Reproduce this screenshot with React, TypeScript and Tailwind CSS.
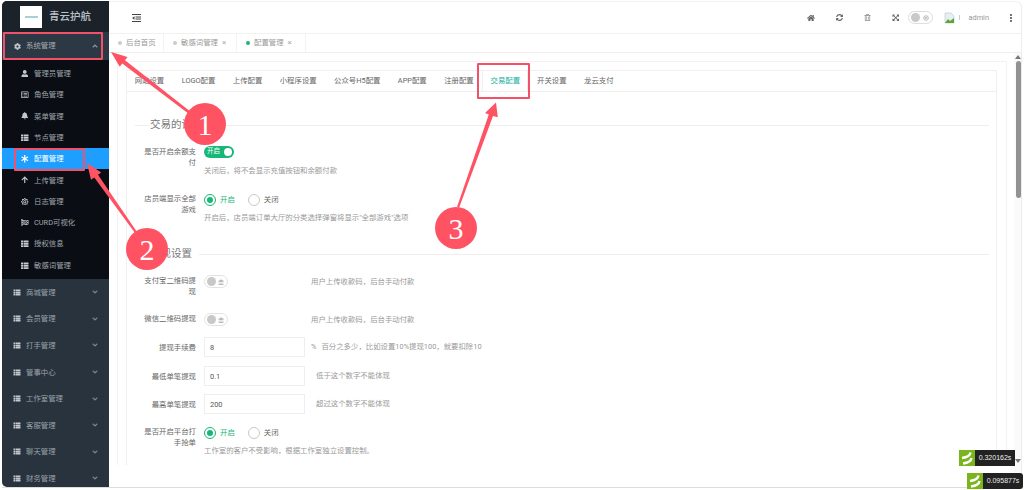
import type { ReactNode } from "react";
import {
  FaAsterisk,
  FaArrowUp,
  FaBell,
  FaCog,
  FaExpandArrowsAlt,
  FaFlagCheckered,
  FaHome,
  FaRegListAlt,
  FaRegSun,
  FaRegTrashAlt,
  FaSyncAlt,
  FaThList,
  FaUser,
  FaAngleDown,
  FaAngleUp,
} from "react-icons/fa";

const subMenu = [
  { name: "管理员管理", icon: <FaUser /> },
  { name: "角色管理", icon: <FaRegListAlt /> },
  { name: "菜单管理", icon: <FaBell /> },
  { name: "节点管理", icon: <FaThList /> },
  { name: "配置管理", icon: <FaAsterisk />, active: true },
  { name: "上传管理", icon: <FaArrowUp /> },
  { name: "日志管理", icon: <FaRegSun /> },
  { name: "CURD可视化", icon: <FaFlagCheckered /> },
  { name: "授权信息", icon: <FaThList /> },
  { name: "敏感词管理", icon: <FaThList /> },
];

const groups = ["商城管理", "会员管理", "打手管理", "管事中心", "工作室管理", "客服管理", "聊天管理", "财务管理"];

const tabs = ["网站设置", "LOGO配置", "上传配置", "小程序设置", "公众号H5配置", "APP配置", "注册配置", "交易配置", "开关设置", "龙云支付"];

function Sidebar() {
  return (
    <aside className="w-[107px] h-[486px] shrink-0 flex flex-col bg-[#29333e] rounded-l-[5px] overflow-hidden">
      <div className="h-[31px] shrink-0 flex items-center bg-[#1b222a] pl-[18px]">
        <div className="w-[22px] h-[22px] bg-white flex items-center justify-center">
          <div className="w-[13px] h-[2px] bg-[#a9d0d8]" />
        </div>
        <span className="ml-[7px] text-[10.5px] font-medium text-[#bcc2c8]">青云护航</span>
      </div>
      <div className="h-[28px] shrink-0 flex items-center bg-[#2c3843] pl-[11px] pr-[10px] text-[#a6adb4]">
        <span className="w-[8px] flex justify-center">
          <FaCog className="text-[7px] text-[#c3c8cc]" />
        </span>
        <span className="ml-[5px] text-[7.4px] flex-1">系统管理</span>
        <FaAngleUp className="text-[8px] text-[#8b949c]" />
      </div>
      <div className="h-[219px] shrink-0 bg-[#0a0e14] pt-[3px]">
        {subMenu.map((item) => (
          <div
            key={item.name}
            className={`h-[21.3px] flex items-center pl-[19px] text-[7.4px] ${
              item.active ? "bg-[#1e9fff] text-white" : "text-[#a0a6ac]"
            }`}
          >
            <span className={`w-[8px] flex justify-center text-[7.5px] ${item.active ? "text-white" : "text-[#c4c8cc]"}`}>
              {item.icon}
            </span>
            <span className="ml-[5px]">{item.name}</span>
          </div>
        ))}
      </div>
      {groups.map((g) => (
        <div key={g} className="h-[26.6px] shrink-0 flex items-center pl-[11px] pr-[10px] text-[#9aa2a9]">
          <FaThList className="w-[8px] h-[7px] text-[#c3c8cc]" />
          <span className="ml-[5px] text-[7.4px] flex-1">{g}</span>
          <FaAngleDown className="text-[8px] text-[#79838c]" />
        </div>
      ))}
    </aside>
  );
}

function Header() {
  return (
    <header className="h-[33px] shrink-0 flex items-center border-b border-t border-[#f1f1f1] rounded-tr-[6px] pl-[23px] text-[#666]">
      <svg width="9" height="8" viewBox="0 0 9 8" className="text-[#444]">
        <path d="M0 0.5h9M3.5 3h5.5M3.5 5h5.5M0 7.5h9" stroke="currentColor" strokeWidth="1" />
        <path d="M2.5 2.2v3.6L0 4z" fill="currentColor" />
      </svg>
      <div className="flex-1" />
      <FaHome className="text-[8px]" />
      <FaSyncAlt className="text-[7px] ml-[21px]" />
      <FaRegTrashAlt className="text-[7px] ml-[21px] text-[#888]" />
      <FaExpandArrowsAlt className="text-[7.5px] ml-[21px]" />
      <div className="ml-[9px] w-[25px] h-[13px] rounded-full border border-[#ddd] flex items-center pl-[2px]">
        <span className="w-[9px] h-[9px] rounded-full bg-[#c9c9c9]" />
        <FaRegSun className="text-[6px] text-[#aaa] ml-[3px]" />
      </div>
      <svg width="11" height="12" viewBox="0 0 11 12" className="ml-[11px]">
        <path d="M1 1h6l3 3v7H1z" fill="#e8eef2" stroke="#b9c4cc" strokeWidth="0.6" />
        <path d="M1 11l3-4 2 2 4-3v5z" fill="#5aa83c" />
      </svg>
      <span className="ml-[4px] w-px h-[5px] bg-[#ccc]" />
      <span className="ml-[8px] text-[7.4px] text-[#999]">admin</span>
      <div className="ml-[21px] mr-[9px] flex flex-col gap-[1px]">
        <span className="w-[2px] h-[2px] bg-[#777]" />
        <span className="w-[2px] h-[2px] bg-[#777]" />
        <span className="w-[2px] h-[2px] bg-[#777]" />
      </div>
    </header>
  );
}

function PageTab({ label, color, close, w }: { label: string; color: string; close?: boolean; w: string }) {
  return (
    <div className={`${w} h-full flex items-center pl-[9px] border-r border-[#f3f3f3] text-[7.4px]`}>
      <span className={`w-[4px] h-[4px] rounded-full ${color}`} />
      <span className="ml-[4px] text-[#999]">{label}</span>
      {close && <span className="ml-[4px] text-[8px] leading-none text-[#aaa]">×</span>}
    </div>
  );
}

function Row({ label, h, children }: { label: string; h: string; children: ReactNode }) {
  return (
    <div className={`${h} flex items-start`}>
      <div className="w-[56px] shrink-0 text-right text-[7.4px] leading-[10.5px] text-[#666]">{label}</div>
      <div className="ml-[8px] flex-1">{children}</div>
    </div>
  );
}

function Help({ children }: { children: ReactNode }) {
  return <div className="text-[7.4px] leading-[10px] text-[#999]">{children}</div>;
}

function Radios() {
  return (
    <div className="flex items-center h-[11px] text-[7.4px]">
      <span className="w-[12px] h-[12px] rounded-full border border-[#16b777] flex items-center justify-center">
        <span className="w-[6px] h-[6px] rounded-full bg-[#16b777]" />
      </span>
      <span className="ml-[4px] text-[#16b777]">开启</span>
      <span className="ml-[13px] w-[12px] h-[12px] rounded-full border border-[#c9c9c9]" />
      <span className="ml-[4px] text-[#666]">关闭</span>
    </div>
  );
}

function OffSwitch({ help }: { help: string }) {
  return (
    <div className="flex items-center -mt-[1px]">
      <div className="w-[24px] h-[13px] rounded-full border border-[#e2e2e2] flex items-center pl-[2px]">
        <span className="w-[9px] h-[9px] rounded-full bg-[#c8c8c8]" />
        <span className="ml-[2px] text-[6px] text-[#999]">击</span>
      </div>
      <div className="ml-[83px]">
        <Help>{help}</Help>
      </div>
    </div>
  );
}

function NumberField({ label, value, help, h }: { label: string; value: string; help: ReactNode; h: string }) {
  return (
    <div className={`${h} flex`}>
      <div className="w-[56px] pt-[6px] text-right text-[7.4px] leading-[10.5px] text-[#666]">{label}</div>
      <div className="ml-[8px] flex items-center h-[20px]">
        <input
          readOnly
          value={value}
          className="w-[101px] h-[20px] border border-[#eeeeee] pl-[5px] text-[7.4px] text-[#555] outline-none"
        />
        {help}
      </div>
    </div>
  );
}

function SectionTitle({ title, className }: { title: string; className: string }) {
  return (
    <div className={`${className} flex items-center`}>
      <div className="w-[14px] h-px bg-[#eeeeee]" />
      <span className="text-[10.5px] leading-[20px] text-[#777] px-[1px]">{title}</span>
      <div className="flex-1 h-px bg-[#eeeeee] ml-[6px]" />
    </div>
  );
}

function ConfigCard() {
  return (
    <div className="ml-[8px] w-[871px] h-[395px] mt-[8px] border-l border-r border-t border-[#f0f0f0] overflow-hidden">
      <div className="h-[21px] flex items-center border-b border-[#eeeeee] pl-[0px]">
        {tabs.map((t, i) => (
          <div
            key={t}
            className={`h-full flex items-center text-[7.4px] ${i === 0 ? "-ml-[1px]" : ""} ${
              t === "交易配置" ? "px-[7.2px] text-[#16b0a0] bg-white border-x border-[#eeeeee]" : "px-[8.7px] text-[#666]"
            }`}
          >
            {t}
          </div>
        ))}
      </div>
      <div className="pl-[8px] pr-[7px]">
        <SectionTitle title="交易的设置" className="h-[20px] mt-[23px] mb-[12px]" />
        <div className="pl-[5px]">
          <Row label="是否开启余额支付" h="h-[47px]">
            <div className="w-[30px] h-[12px] -mt-[1px] rounded-full bg-[#16b777] flex items-center justify-between px-[2px] text-[6.5px] text-white">
              <span className="pl-[1px]">开启</span>
              <span className="w-[8px] h-[8px] rounded-full bg-white" />
            </div>
            <div className="mt-[8px]">
              <Help>关闭后，将不会显示充值按钮和余额付款</Help>
            </div>
          </Row>
          <Row label="店员端显示全部游戏" h="h-[50px]">
            <Radios />
            <div className="mt-[8px]">
              <Help>开启后，店员端订单大厅的分类选择弹窗将显示"全部游戏"选项</Help>
            </div>
          </Row>
        </div>
        <SectionTitle title="提现设置" className="h-[20px] mb-[12px]" />
        <div className="pl-[5px]">
          <Row label="支付宝二维码提现" h="h-[38px]">
            <OffSwitch help="用户上传收款码，后台手动付款" />
          </Row>
          <Row label="微信二维码提现" h="h-[23px]">
            <OffSwitch help="用户上传收款码，后台手动付款" />
          </Row>
          <NumberField
            label="提现手续费"
            value="8"
            h="h-[29px]"
            help={
              <div className="ml-[6px] flex">
                <Help>%</Help>
                <div className="ml-[5px]">
                  <Help>百分之多少，比如设置10%提现100，就要扣除10</Help>
                </div>
              </div>
            }
          />
          <NumberField
            label="最低单笔提现"
            value="0.1"
            h="h-[28px]"
            help={
              <div className="ml-[11px]">
                <Help>低于这个数字不能体现</Help>
              </div>
            }
          />
          <NumberField
            label="最高单笔提现"
            value="200"
            h="h-[33px]"
            help={
              <div className="ml-[11px]">
                <Help>超过这个数字不能体现</Help>
              </div>
            }
          />
          <Row label="是否开启平台打手抢单" h="h-[40px]">
            <Radios />
            <div className="mt-[8px]">
              <Help>工作室的客户不受影响，根据工作室独立设置控制。</Help>
            </div>
          </Row>
        </div>
      </div>
    </div>
  );
}

function Timer({ value, className, rounded }: { value: string; className: string; rounded?: boolean }) {
  return (
    <div className={`absolute flex h-[16px] ${className}`}>
      <div className="w-[16px] h-full bg-[#7ab51d] flex items-center justify-center">
        <svg width="12" height="14" viewBox="0 0 12 14" fill="none" stroke="white" strokeWidth="2.4">
          <path d="M1 7c4-.5 8-2 8.500-5.500" />
          <path d="M2 12.500c4-.5 8-2 8.500-5.500" />
        </svg>
      </div>
      <div
        className={`w-[40px] h-full bg-[#222] text-[#eeeeee] text-[7px] flex items-center justify-center font-['Liberation_Sans'] ${
          rounded ? "rounded-r-[3px]" : ""
        }`}
      >
        {value}
      </div>
    </div>
  );
}

function Callout({ n, className }: { n: number; className: string }) {
  return (
    <div
      className={`absolute w-[42px] h-[42px] rounded-full bg-[#ff5364] text-white flex items-center justify-center text-[30px] font-['Liberation_Serif'] ${className}`}
    >
      {n}
    </div>
  );
}

function Annotations() {
  return (
    <>
      <div className="absolute left-[3px] top-[32px] w-[100px] h-[28px] border-2 border-[#f2516a] rounded-[1px]" />
      <div className="absolute left-[14px] top-[148px] w-[71px] h-[23px] border-2 border-[#f2516a] rounded-[1px]" />
      <div className="absolute left-[477px] top-[63px] w-[53px] h-[36px] border-2 border-[#f2516a] rounded-[1px]" />
      <svg className="absolute left-0 top-0" width="1024" height="490" viewBox="0 0 1024 490">
        <polygon points="111,52 127.500,56.900 125,60.200 191,112 189,114 122.300,63.500 119.700,66.700" fill="#ff5364" />
        <polygon points="87,163 101.200,172.500 98,174.800 137,232 135,233 94.300,177.500 91,179.700" fill="#ff5364" />
        <polygon points="496,102.500 497.800,117.200 493,116 459,208 457,207 488.800,114.500 485,113" fill="#ff5364" />
      </svg>
      <Callout n={1} className="left-[184px] top-[103px]" />
      <Callout n={2} className="left-[126px] top-[228px]" />
      <Callout n={3} className="left-[435px] top-[207px]" />
    </>
  );
}

export default function App() {
  return (
    <div className="relative w-[1024px] h-[490px] overflow-hidden bg-white font-['Roboto','Noto_Sans_CJK_SC',sans-serif]">
      <div className="absolute left-[2px] top-[1px] right-[2px] bottom-[2px] flex border-b border-[#dddddd]">
        <Sidebar />
        <main className="flex-1 min-w-0 flex flex-col border-r border-[#ececec] rounded-tr-[6px]">
          <Header />
          <div className="h-[19px] shrink-0 flex border-b border-[#eeeeee]">
            <PageTab label="后台首页" color="bg-[#cccccc]" w="w-[55px]" />
            <PageTab label="敏感词管理" color="bg-[#cccccc]" close w="w-[73px]" />
            <PageTab label="配置管理" color="bg-[#16b777]" close w="w-[69px]" />
          </div>
          <div className="flex-1 flex min-h-0">
            <div className="ml-[8px] mt-[8px] w-[890px] h-[404px] border-l border-r border-t border-[#f2f2f2]">
              <ConfigCard />
            </div>
            <div className="ml-auto w-[7px] h-full flex flex-col items-end pt-[2px] bg-[#fafafa]">
              <span className="mr-[0.500px] w-0 h-0 border-x-[3px] border-x-transparent border-b-[4px] border-b-[#777]" />
              <div className="mt-[2px] w-[5px] h-[137px] bg-[#929292] rounded-[3px]" />
              <div className="flex-1" />
              <span className="mr-[0.500px] mb-[24px] w-0 h-0 border-x-[3px] border-x-transparent border-t-[4px] border-t-[#777]" />
            </div>
          </div>
        </main>
      </div>
      <Annotations />
      <Timer value="0.320162s" className="left-[959px] top-[450px]" />
      <Timer value="0.095877s" className="left-[967px] top-[473px]" rounded />
    </div>
  );
}
